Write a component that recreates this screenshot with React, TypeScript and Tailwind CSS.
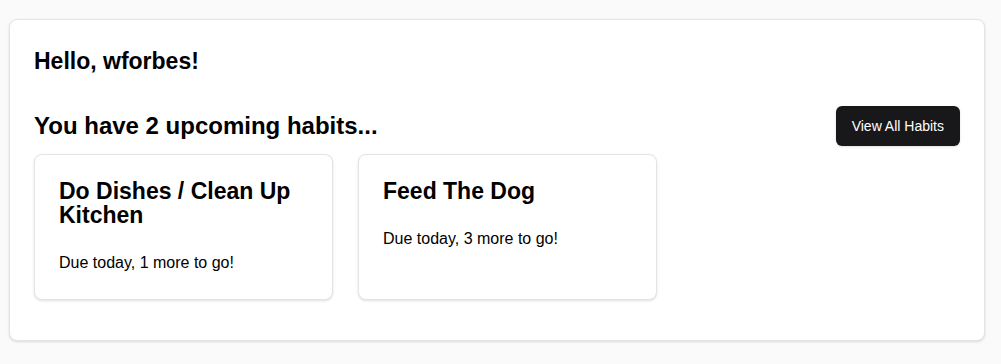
const HABITS = [
  { id: 1, name: 'Do Dishes / Clean Up Kitchen', remaining: 1 },
  { id: 2, name: 'Feed The Dog', remaining: 3 },
];

export default function App() {
  return (
    <div
      className="min-h-[364px] bg-[#fafafa] pt-[19px] pb-[23px] pl-[9px] pr-[16px] text-black"
      style={{ fontFamily: '"Liberation Sans", Arial, sans-serif' }}
    >
      <div className="rounded-lg border border-[#e4e4e7] bg-white px-6 pt-[25px] pb-10 shadow-sm">
        <h1 className="text-[23px] font-bold leading-8">Hello, wforbes!</h1>

        <div className="mt-[29px] flex items-center justify-between">
          <h2 className="text-2xl font-bold leading-8">You have {HABITS.length} upcoming habits...</h2>
          <button className="h-10 rounded-md bg-[#18181b] px-4 text-sm text-white shadow">
            View All Habits
          </button>
        </div>

        <div className="mt-[8px] flex gap-[25px]">
          {HABITS.map((habit) => (
            <div
              key={habit.id}
              className="w-[299px] rounded-lg border border-[#e4e4e7] bg-white p-6 shadow-sm"
            >
              <h3 className="text-[23px] font-bold leading-6">{habit.name}</h3>
              <p className="mt-6 text-base leading-6">Due today, {habit.remaining} more to go!</p>
            </div>
          ))}
        </div>
      </div>
    </div>
  );
}
